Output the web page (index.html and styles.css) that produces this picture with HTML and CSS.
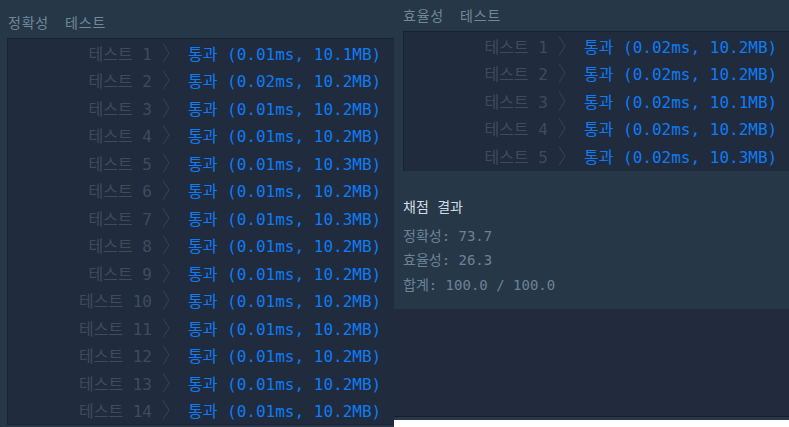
FILE: index.html
```html
<!DOCTYPE html>
<html lang="ko">
<head>
<meta charset="utf-8">
<link rel="stylesheet" href="styles.css">
</head>
<body>
<div class="page">
  <section class="panel panel-left">
    <h2 class="heading"><span class="heading-kind">정확성</span><span>테스트</span></h2>
    <div class="box box-left">
      <div class="row"><span class="label">테스트 1</span><svg class="chev" viewBox="0 0 8 20"><path d="M1 0.5 L7 10 L1 19.5"/></svg><span class="result">통과 (0.01ms, 10.1MB)</span></div>
      <div class="row"><span class="label">테스트 2</span><svg class="chev" viewBox="0 0 8 20"><path d="M1 0.5 L7 10 L1 19.5"/></svg><span class="result">통과 (0.02ms, 10.2MB)</span></div>
      <div class="row"><span class="label">테스트 3</span><svg class="chev" viewBox="0 0 8 20"><path d="M1 0.5 L7 10 L1 19.5"/></svg><span class="result">통과 (0.01ms, 10.2MB)</span></div>
      <div class="row"><span class="label">테스트 4</span><svg class="chev" viewBox="0 0 8 20"><path d="M1 0.5 L7 10 L1 19.5"/></svg><span class="result">통과 (0.01ms, 10.2MB)</span></div>
      <div class="row"><span class="label">테스트 5</span><svg class="chev" viewBox="0 0 8 20"><path d="M1 0.5 L7 10 L1 19.5"/></svg><span class="result">통과 (0.01ms, 10.3MB)</span></div>
      <div class="row"><span class="label">테스트 6</span><svg class="chev" viewBox="0 0 8 20"><path d="M1 0.5 L7 10 L1 19.5"/></svg><span class="result">통과 (0.01ms, 10.2MB)</span></div>
      <div class="row"><span class="label">테스트 7</span><svg class="chev" viewBox="0 0 8 20"><path d="M1 0.5 L7 10 L1 19.5"/></svg><span class="result">통과 (0.01ms, 10.3MB)</span></div>
      <div class="row"><span class="label">테스트 8</span><svg class="chev" viewBox="0 0 8 20"><path d="M1 0.5 L7 10 L1 19.5"/></svg><span class="result">통과 (0.01ms, 10.2MB)</span></div>
      <div class="row"><span class="label">테스트 9</span><svg class="chev" viewBox="0 0 8 20"><path d="M1 0.5 L7 10 L1 19.5"/></svg><span class="result">통과 (0.01ms, 10.2MB)</span></div>
      <div class="row"><span class="label">테스트 10</span><svg class="chev" viewBox="0 0 8 20"><path d="M1 0.5 L7 10 L1 19.5"/></svg><span class="result">통과 (0.01ms, 10.2MB)</span></div>
      <div class="row"><span class="label">테스트 11</span><svg class="chev" viewBox="0 0 8 20"><path d="M1 0.5 L7 10 L1 19.5"/></svg><span class="result">통과 (0.01ms, 10.2MB)</span></div>
      <div class="row"><span class="label">테스트 12</span><svg class="chev" viewBox="0 0 8 20"><path d="M1 0.5 L7 10 L1 19.5"/></svg><span class="result">통과 (0.01ms, 10.2MB)</span></div>
      <div class="row"><span class="label">테스트 13</span><svg class="chev" viewBox="0 0 8 20"><path d="M1 0.5 L7 10 L1 19.5"/></svg><span class="result">통과 (0.01ms, 10.2MB)</span></div>
      <div class="row"><span class="label">테스트 14</span><svg class="chev" viewBox="0 0 8 20"><path d="M1 0.5 L7 10 L1 19.5"/></svg><span class="result">통과 (0.01ms, 10.2MB)</span></div>
    </div>
  </section>
  <section class="panel panel-right">
    <h2 class="heading"><span class="heading-kind">효율성</span><span>테스트</span></h2>
    <div class="box box-right">
      <div class="row"><span class="label">테스트 1</span><svg class="chev" viewBox="0 0 8 20"><path d="M1 0.5 L7 10 L1 19.5"/></svg><span class="result">통과 (0.02ms, 10.2MB)</span></div>
      <div class="row"><span class="label">테스트 2</span><svg class="chev" viewBox="0 0 8 20"><path d="M1 0.5 L7 10 L1 19.5"/></svg><span class="result">통과 (0.02ms, 10.2MB)</span></div>
      <div class="row"><span class="label">테스트 3</span><svg class="chev" viewBox="0 0 8 20"><path d="M1 0.5 L7 10 L1 19.5"/></svg><span class="result">통과 (0.02ms, 10.1MB)</span></div>
      <div class="row"><span class="label">테스트 4</span><svg class="chev" viewBox="0 0 8 20"><path d="M1 0.5 L7 10 L1 19.5"/></svg><span class="result">통과 (0.02ms, 10.2MB)</span></div>
      <div class="row"><span class="label">테스트 5</span><svg class="chev" viewBox="0 0 8 20"><path d="M1 0.5 L7 10 L1 19.5"/></svg><span class="result">통과 (0.02ms, 10.3MB)</span></div>
    </div>
    <div class="summary">
      <div class="summary-title">채점 결과</div>
      <div class="summary-line">정확성: 73.7</div>
      <div class="summary-line">효율성: 26.3</div>
      <div class="summary-line">합계: 100.0 / 100.0</div>
    </div>
    <div class="console"></div>
    <div class="strip"></div>
    <div class="blank"></div>
  </section>
</div>
</body>
</html>
```
FILE: styles.css
```css
html, body {
  margin: 0;
  padding: 0;
}
body {
  background: #263747;
  font-family: "DejaVu Sans Mono", "Noto Sans CJK KR", monospace;
  overflow: hidden;
}
.page {
  display: flex;
  width: 789px;
  height: 427px;
  overflow: hidden;
}
.panel {
  display: flex;
  flex-direction: column;
}
.panel-left {
  width: 394px;
  flex: none;
  padding: 12px 0 0 7px;
  box-sizing: border-box;
}
.panel-right {
  flex: 1;
  padding-top: 5px;
  min-width: 0;
}
.heading {
  margin: 0 0 6px 1px;
  height: 20px;
  line-height: 20px;
  font-size: 14px;
  letter-spacing: 0.8px;
  font-weight: normal;
  color: #71879a;
  font-family: "Noto Sans CJK KR", sans-serif;
  white-space: nowrap;
}
.heading-kind {
  margin-right: 16px;
}
.panel-right .heading {
  margin-left: 9px;
}
.box {
  background: #202b3d;
  border-top: 1px solid #172230;
  border-left: 1px solid #1a2433;
  flex: none;
}
.box-left {
  border-bottom: 1px solid #1a2433;
}
.box-right {
  margin-left: 9px;
  width: 400px;
  border-bottom: 1px solid #1f2a38;
}
.row {
  display: flex;
  align-items: center;
  height: 27.5px;
  font-size: 16px;
  white-space: nowrap;
}
.label {
  width: 144px;
  text-align: right;
  color: #3f4b5c;
  flex: none;
}
.chev {
  width: 8px;
  height: 20px;
  margin-left: 10px;
  flex: none;
  fill: none;
  stroke: #343f50;
  stroke-width: 1.1;
}
.result {
  margin-left: 18px;
  color: #0f7bf4;
}
.summary {
  height: 138px;
  box-sizing: border-box;
  padding: 26px 0 0 9px;
  flex: none;
}
.summary-title {
  font-size: 14px;
  line-height: 20px;
  color: #d2dae2;
  margin-bottom: 7px;
}
.summary-line {
  font-size: 14px;
  line-height: 24.5px;
  color: #6b8397;
}
.console {
  height: 107px;
  background: #212b3d;
  border-bottom: 1px solid #142030;
  flex: none;
}
.strip {
  height: 3px;
  background: #263747;
  flex: none;
}
.blank {
  flex: 1;
  background: #ffffff;
}
```
